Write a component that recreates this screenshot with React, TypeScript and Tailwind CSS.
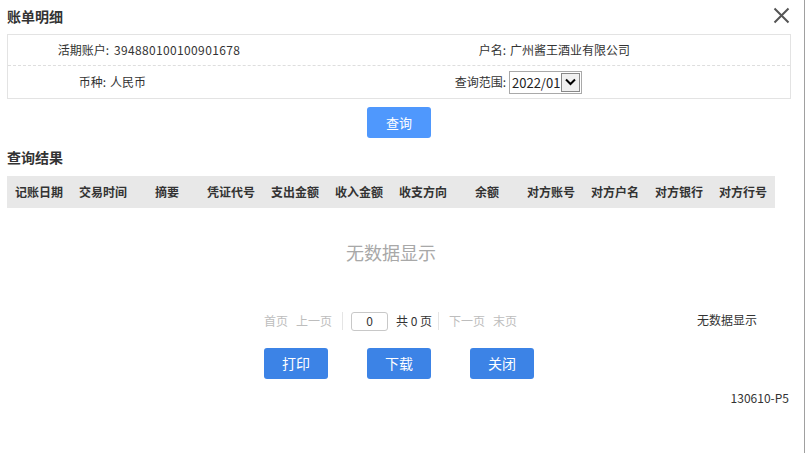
import React from "react";

const headers = ["记账日期","交易时间","摘要","凭证代号","支出金额","收入金额","收支方向","余额","对方账号","对方户名","对方银行","对方行号"];

export default function App() {
  return (
    <div className="w-[806px] h-[453px] bg-white overflow-hidden" style={{ fontFamily: '"Noto Sans CJK SC", "Noto Sans", sans-serif' }}>
      <div className="w-[805px] h-[453px] border-r border-[#a0a0a0] relative text-[#333]">
        <div className="flex items-center justify-between pl-[7px] pr-[14px] h-[32px]">
          <div className="text-[14px] font-bold leading-none">账单明细</div>
          <svg width="17" height="17" viewBox="0 0 17 17" className="mt-[-1px]">
            <path d="M1.5 1.5 L15.5 15.5 M15.5 1.5 L1.5 15.5" stroke="#555" strokeWidth="2" fill="none" />
          </svg>
        </div>
        <div className="mx-[7px] mt-[2px] w-[784px] border border-[#e3e3e3] text-[12px]">
          <div className="flex h-[31px] items-center border-b border-dashed border-[#dedede]">
            <div className="w-[392px] flex">
              <div className="w-[101px] text-right">活期账户:</div>
              <div className="pl-[5px] tracking-[0.35px]">394880100100901678</div>
            </div>
            <div className="flex">
              <div className="w-[106px] text-right">户名:</div>
              <div className="pl-[4px]">广州酱王酒业有限公司</div>
            </div>
          </div>
          <div className="flex h-[32px] items-center">
            <div className="w-[392px] flex">
              <div className="w-[98px] text-right">币种:</div>
              <div className="pl-[4px]">人民币</div>
            </div>
            <div className="flex items-center">
              <div className="w-[106px] text-right">查询范围:</div>
              <div className="ml-[3px] flex items-center h-[23px] w-[73px] border border-[#a9a9a9] bg-white">
                <div className="pl-[2px] text-[13px] text-[#222] flex-1 leading-none">2022/01</div>
                <div className="h-[19px] w-[19px] mr-[1px] border border-[#888] bg-[#f0f0f0] flex items-center justify-center">
                  <svg width="11" height="8" viewBox="0 0 11 8"><path d="M1 1.5 L5.5 6 L10 1.5" stroke="#000" strokeWidth="2" fill="none" /></svg>
                </div>
              </div>
            </div>
          </div>
        </div>
        <div className="flex justify-center mt-[8px] pr-[6px]">
          <div className="w-[64px] h-[31px] rounded-[3px] bg-[#4f98fd] text-white text-[13px] flex items-center justify-center">查询</div>
        </div>
        <div className="pl-[7px] mt-[12px] text-[14px] font-bold leading-none h-[18px]">查询结果</div>
        <div className="ml-[7px] mt-[8px] w-[768px] h-[32px] bg-[#e8e8e8] grid grid-cols-12 items-center text-[12px] font-bold text-[#333]">
          {headers.map((h) => (
            <div key={h} className="text-center">{h}</div>
          ))}
        </div>
        <div className="w-[782px] flex justify-center mt-[35px] text-[18px] text-[#a8a8a8] leading-none h-[24px]">无数据显示</div>
        <div className="relative mt-[44px] h-[20px] text-[12px] flex items-center">
          <div className="flex items-center pl-[264px]">
            <span className="text-[#bdbdbd]">首页</span>
            <span className="text-[#bdbdbd] ml-[8px]">上一页</span>
            <span className="ml-[10px] w-[1px] h-[18px] bg-[#e5e5e5]"></span>
            <div className="ml-[8px] w-[37px] h-[19px] border border-[#c8c8c8] rounded-[3px] flex items-center justify-center text-[12px] text-[#333]">0</div>
            <span className="ml-[8px] text-[#333] whitespace-pre">共 0 页</span>
            <span className="ml-[6px] w-[1px] h-[18px] bg-[#e5e5e5]"></span>
            <span className="text-[#bdbdbd] ml-[10px]">下一页</span>
            <span className="text-[#bdbdbd] ml-[8px]">末页</span>
          </div>
          <div className="absolute left-[697px] top-[0px] text-[#333]">无数据显示</div>
        </div>
        <div className="flex justify-center gap-[39px] mt-[17px] pr-[6px]">
          {["打印","下载","关闭"].map((t) => (
            <div key={t} className="w-[64px] h-[31px] rounded-[3px] bg-[#3c83e6] text-white text-[14px] flex items-center justify-center">{t}</div>
          ))}
        </div>
        <div className="flex justify-end pr-[15px] mt-[10px] text-[12px] text-[#333]">130610-P5</div>
      </div>
    </div>
  );
}
